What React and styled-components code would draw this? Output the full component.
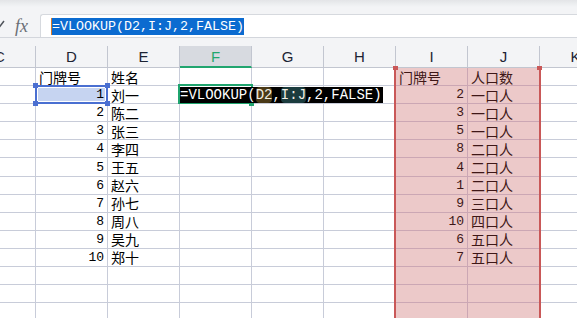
import React from "react";
import styled, { createGlobalStyle } from "styled-components";

const COL_W = 72;
const ROW_H = 18.1;
const COLUMNS = ["C", "D", "E", "F", "G", "H", "I", "J", "K"];
const ACTIVE_COL = "F";
const RANGE_COLS = ["I", "J"];
const ROW_COUNT = 14;

const names = ["刘一", "陈二", "张三", "李四", "王五", "赵六", "孙七", "周八", "吴九", "郑十"];
const lookup = [
  [2, "一口人"],
  [3, "一口人"],
  [5, "一口人"],
  [8, "二口人"],
  [4, "二口人"],
  [1, "二口人"],
  [9, "三口人"],
  [10, "四口人"],
  [6, "五口人"],
  [7, "五口人"],
];

function buildRows() {
  const rows = [];
  for (let r = 0; r < ROW_COUNT; r++) {
    const row = {};
    if (r === 0) {
      row.D = "门牌号";
      row.E = "姓名";
      row.I = "门牌号";
      row.J = "人口数";
    } else if (r <= 10) {
      row.D = r;
      row.E = names[r - 1];
      row.I = lookup[r - 1][0];
      row.J = lookup[r - 1][1];
    }
    rows.push(row);
  }
  return rows;
}

const rows = buildRows();
const colIndex = (c) => COLUMNS.indexOf(c);

export default function App() {
  return (
    <>
      <GlobalStyle />
      <Window>
        <FormulaBar>
          <IconSlot>
            <CheckIcon viewBox="0 0 12 12">
              <polyline points="1,6 5,10 11,2" />
            </CheckIcon>
            <FxLabel>fx</FxLabel>
          </IconSlot>
          <InputBox>
            <Caret />
            <BarSelection>=VLOOKUP(D2,I:J,2,FALSE)</BarSelection>
          </InputBox>
        </FormulaBar>

        <HeaderArea>
          <HeaderRow>
            {COLUMNS.map((c) => (
              <HeaderCell key={c} $active={c === ACTIVE_COL}>
                {c}
              </HeaderCell>
            ))}
          </HeaderRow>
        </HeaderArea>

        <Sheet>
          {rows.map((row, r) =>
            COLUMNS.map((c) => {
              const value = row[c];
              const inRange = RANGE_COLS.includes(c);
              return (
                <Cell
                  key={`${c}${r}`}
                  $range={inRange}
                  $selected={c === "D" && r === 1}
                  $num={typeof value === "number"}
                >
                  {value}
                </Cell>
              );
            })
          )}

          <RangeFrame $col={colIndex("I")}>
            <RangeHandle $side="left" />
            <RangeHandle $side="right" />
          </RangeFrame>

          <SelectionBox $col={colIndex("D")} $row={1}>
            <BlueHandle $v="top" $h="left" />
            <BlueHandle $v="top" $h="right" />
            <BlueHandle $v="bottom" $h="left" />
            <BlueHandle $v="bottom" $h="right" />
          </SelectionBox>

          <ActiveBox $col={colIndex(ACTIVE_COL)} $row={1}>
            <FillHandle />
          </ActiveBox>

          <Editor $col={colIndex(ACTIVE_COL)} $row={1}>
            =VLOOKUP(<Ref $tone="#4a3a17">D2</Ref>,<Ref $tone="#1b3c3e">I:J</Ref>,2,FALSE)
          </Editor>
        </Sheet>
      </Window>
    </>
  );
}

const GlobalStyle = createGlobalStyle`
  html, body {
    margin: 0;
    padding: 0;
    background: #ffffff;
    overflow: hidden;
  }
`;

const Window = styled.div`
  width: 577px;
  height: 318px;
  overflow: hidden;
  background: #ffffff;
  font-family: "Liberation Sans", Arial, sans-serif;
`;

const FormulaBar = styled.div`
  height: 38px;
  box-sizing: border-box;
  display: flex;
  align-items: flex-end;
  border-bottom: 1px solid #d3d6dc;
  background: linear-gradient(#e3e4e7 0, #eceef0 4px, #f3f4f6 7px);
`;

const IconSlot = styled.div`
  width: 40px;
  height: 23px;
  display: flex;
  align-items: center;
  flex-shrink: 0;
`;

const CheckIcon = styled.svg`
  width: 12px;
  height: 12px;
  margin-left: -7px;
  margin-top: -2px;
  fill: none;
  stroke: #4f535a;
  stroke-width: 1.5;
`;

const FxLabel = styled.span`
  margin-left: 10px;
  font-family: "Liberation Serif", "Times New Roman", serif;
  font-style: italic;
  font-size: 18px;
  color: #6a6e75;
  line-height: 18px;
`;

const InputBox = styled.div`
  flex: 1;
  height: 23px;
  box-sizing: border-box;
  background: #ffffff;
  border-top: 1px solid #d6d9de;
  border-left: 1px solid #d6d9de;
  border-top-left-radius: 3px;
  display: flex;
  align-items: center;
  padding-left: 10px;
`;

const Caret = styled.span`
  width: 1px;
  height: 17px;
  background: #d97a2a;
`;

const BarSelection = styled.span`
  background: #0b6bd0;
  color: #ffffff;
  font-family: "Liberation Mono", "Courier New", monospace;
  font-size: 13.33px;
  line-height: 17px;
  height: 17px;
  white-space: nowrap;
`;

const HeaderArea = styled.div`
  background: #f3f4f6;
  padding-top: 8px;
`;

const HeaderRow = styled.div`
  display: grid;
  grid-template-columns: repeat(${COLUMNS.length}, ${COL_W}px);
  margin-left: -${COL_W / 2}px;
  height: 22px;
`;

const HeaderCell = styled.div`
  box-sizing: border-box;
  display: flex;
  align-items: center;
  justify-content: center;
  border-right: 1px solid #c2c6d0;
  border-bottom: ${(p) => (p.$active ? "2px solid #21a56f" : "1px solid #c2c6d0")};
  background: ${(p) => (p.$active ? "#d7dae0" : "transparent")};
  color: ${(p) => (p.$active ? "#1fa76f" : "#1c2333")};
  font-size: 15px;
`;

const Sheet = styled.div`
  position: relative;
  display: grid;
  grid-template-columns: repeat(${COLUMNS.length}, ${COL_W}px);
  grid-auto-rows: ${ROW_H}px;
  margin-left: -${COL_W / 2}px;
`;

const Cell = styled.div`
  box-sizing: border-box;
  display: flex;
  align-items: center;
  justify-content: ${(p) => (p.$num ? "flex-end" : "flex-start")};
  padding: 0 3px 0 3px;
  border-right: 1px solid ${(p) => (p.$range ? "#cba7b4" : "#c8ccd9")};
  border-bottom: 1px solid ${(p) => (p.$range ? "#cba7b4" : "#c8ccd9")};
  background: ${(p) => (p.$range ? "#ecc9c9" : p.$selected ? "#c6d4f1" : "#ffffff")};
  color: ${(p) => (p.$range ? "#3e1717" : "#000000")};
  font-family: ${(p) =>
    p.$num
      ? '"Liberation Mono", "Courier New", monospace'
      : '"Noto Sans CJK SC", "Noto Sans", sans-serif'};
  font-size: ${(p) => (p.$num ? "13px" : "14px")};
  line-height: 1;
  white-space: nowrap;
  overflow: hidden;
`;

const RangeFrame = styled.div`
  position: absolute;
  top: 0;
  bottom: 0;
  left: ${(p) => p.$col * COL_W - 2}px;
  width: ${COL_W * 2 + 3}px;
  box-sizing: border-box;
  border-left: 2px solid #c95858;
  border-right: 2px solid #c95858;
  pointer-events: none;
`;

const RangeHandle = styled.span`
  position: absolute;
  top: -2px;
  ${(p) => p.$side}: -3px;
  width: 5px;
  height: 4px;
  background: #c95858;
`;

const SelectionBox = styled.div`
  position: absolute;
  left: ${(p) => p.$col * COL_W - 1}px;
  top: ${(p) => Math.round(p.$row * ROW_H) - 1}px;
  width: ${COL_W + 1}px;
  height: 19px;
  box-sizing: border-box;
  border: 2px solid #4a6fd1;
  box-shadow: inset 0 0 0 1px #ffffff;
`;

const BlueHandle = styled.span`
  position: absolute;
  ${(p) => p.$v}: -4px;
  ${(p) => p.$h}: -4px;
  width: 5px;
  height: 5px;
  background: #4a6fd1;
`;

const ActiveBox = styled.div`
  position: absolute;
  left: ${(p) => p.$col * COL_W - 2}px;
  top: ${(p) => Math.round(p.$row * ROW_H) - 2}px;
  width: ${COL_W + 3}px;
  height: 20px;
  box-sizing: border-box;
  border: 2px solid #1fa46e;
`;

const FillHandle = styled.span`
  position: absolute;
  right: -3px;
  bottom: -4px;
  width: 5px;
  height: 4px;
  background: #1fa46e;
`;

const Editor = styled.div`
  position: absolute;
  left: ${(p) => p.$col * COL_W}px;
  top: ${(p) => Math.round(p.$row * ROW_H) + 1}px;
  height: 16px;
  padding-right: 1px;
  background: #000000;
  color: #ffffff;
  font-family: "Liberation Mono", "Courier New", monospace;
  font-size: 14px;
  line-height: 16px;
  white-space: nowrap;
`;

const Ref = styled.span`
  background: ${(p) => p.$tone};
  border-radius: 4px;
  color: #f3efe4;
`;
